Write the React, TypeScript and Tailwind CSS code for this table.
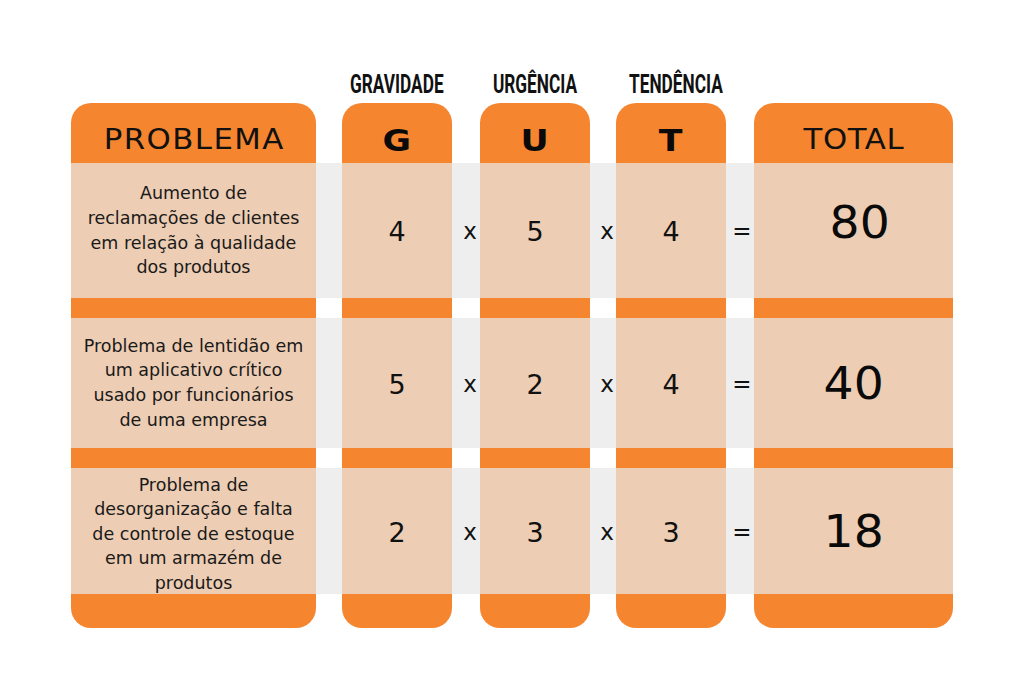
import React from "react";

const body = { fontFamily: '"DejaVu Sans", "Noto Sans", sans-serif' };
const label = { fontFamily: 'Roboto, "Liberation Sans", sans-serif' };

const rowH = ["h-[135px]", "h-[130px]", "h-[126px]"];

function Col({
  width,
  header,
  cells,
}: {
  width: string;
  header: React.ReactNode;
  cells: React.ReactNode[];
}) {
  return (
    <div className={`flex flex-col ${width}`}>
      <div className="h-[60px] pt-[14px] rounded-t-[20px] bg-[#f5852f] flex items-center justify-center">
        {header}
      </div>
      <div className={`${rowH[0]} bg-[#edcdb3] flex items-center justify-center`}>{cells[0]}</div>
      <div className="h-[20px] bg-[#f5852f]" />
      <div className={`${rowH[1]} bg-[#edcdb3] flex items-center justify-center`}>{cells[1]}</div>
      <div className="h-[20px] bg-[#f5852f]" />
      <div className={`${rowH[2]} bg-[#edcdb3] flex items-center justify-center`}>{cells[2]}</div>
      <div className="h-[34px] rounded-b-[20px] bg-[#f5852f]" />
    </div>
  );
}

function Gap({ width, sym, shift }: { width: string; sym: string; shift: string }) {
  const s = (
    <span className={`text-[23px] leading-none text-[#111] ${shift}`} style={body}>
      {sym}
    </span>
  );
  return (
    <div className={`flex flex-col ${width}`}>
      <div className="h-[60px] bg-white" />
      <div className={`${rowH[0]} bg-[#eeeeee] flex items-center justify-center`}>{s}</div>
      <div className="h-[20px] bg-white" />
      <div className={`${rowH[1]} bg-[#eeeeee] flex items-center justify-center`}>{s}</div>
      <div className="h-[20px] bg-white" />
      <div className={`${rowH[2]} bg-[#eeeeee] flex items-center justify-center`}>{s}</div>
      <div className="h-[34px] bg-white" />
    </div>
  );
}

function Num({ v }: { v: string }) {
  return (
    <span className="text-[27px] leading-none text-[#111] mt-[2px]" style={body}>
      {v}
    </span>
  );
}

function Total({ v, extra = "" }: { v: string; extra?: string }) {
  return (
    <span className={`text-[45px] leading-none text-[#0a0a0a] scale-x-[1.05] inline-block ${extra}`} style={body}>
      {v}
    </span>
  );
}

function Desc({ lines }: { lines: string[] }) {
  return (
    <p className="text-[17.5px] leading-[24.6px] text-[#1a1a1a] text-center" style={body}>
      {lines.map((l, i) => (
        <React.Fragment key={i}>
          {l}
          {i < lines.length - 1 && <br />}
        </React.Fragment>
      ))}
    </p>
  );
}

function Letter({ c }: { c: string }) {
  return (
    <span className="text-[31px] font-black leading-none text-[#0a0a0a] scale-x-[1.12] inline-block" style={body}>
      {c}
    </span>
  );
}

function Big({ t, track }: { t: string; track: string }) {
  return (
    <span className={`text-[28px] leading-none text-[#111] scale-x-[1.1] inline-block ${track}`} style={body}>
      {t}
    </span>
  );
}

function Label({ t, extra = "" }: { t: string; extra?: string }) {
  return (
    <div className={`w-[110px] flex justify-center ${extra}`}>
      <span
        className="text-[25px] font-bold leading-none text-[#111] whitespace-nowrap scale-x-[0.69] inline-block"
        style={label}
      >
        {t}
      </span>
    </div>
  );
}

export default function App() {
  return (
    <div className="w-[1024px] h-[699px] bg-white pt-[72px]">
      <div className="flex ml-[71px] h-[25px] mb-[6px]">
        <div className="w-[245px]" />
        <div className="w-[26px]" />
        <Label t="GRAVIDADE" />
        <div className="w-[28px]" />
        <Label t="URGÊNCIA" />
        <div className="w-[26px]" />
        <Label t="TENDÊNCIA" extra="pl-[10px]" />
      </div>
      <div className="flex ml-[71px]">
        <Col
          width="w-[245px]"
          header={<Big t="PROBLEMA" track="tracking-[1.3px] ml-[1px]" />}
          cells={[
            <Desc
              lines={[
                "Aumento de",
                "reclamações de clientes",
                "em relação à qualidade",
                "dos produtos",
              ]}
            />,
            <Desc
              lines={[
                "Problema de lentidão em",
                "um aplicativo crítico",
                "usado por funcionários",
                "de uma empresa",
              ]}
            />,
            <div className="mt-[6px]">
              <Desc
                lines={[
                  "Problema de",
                  "desorganização e falta",
                  "de controle de estoque",
                  "em um armazém de",
                  "produtos",
                ]}
              />
            </div>,
          ]}
        />
        <Gap width="w-[26px]" sym="" shift="" />
        <Col width="w-[110px]" header={<Letter c="G" />} cells={[<Num v="4" />, <Num v="5" />, <Num v="2" />]} />
        <Gap width="w-[28px]" sym="x" shift="ml-[8px] mt-[2px]" />
        <Col width="w-[110px]" header={<Letter c="U" />} cells={[<Num v="5" />, <Num v="2" />, <Num v="3" />]} />
        <Gap width="w-[26px]" sym="x" shift="ml-[8px] mt-[2px]" />
        <Col width="w-[110px]" header={<Letter c="T" />} cells={[<Num v="4" />, <Num v="4" />, <Num v="3" />]} />
        <Gap width="w-[28px]" sym="=" shift="ml-[4px] mt-[2px]" />
        <Col
          width="w-[199px]"
          header={<Big t="TOTAL" track="tracking-[0.6px] ml-[1px]" />}
          cells={[<Total v="80" extra="mb-[16px] ml-[12px]" />, <Total v="40" />, <Total v="18" />]}
        />
      </div>
    </div>
  );
}
